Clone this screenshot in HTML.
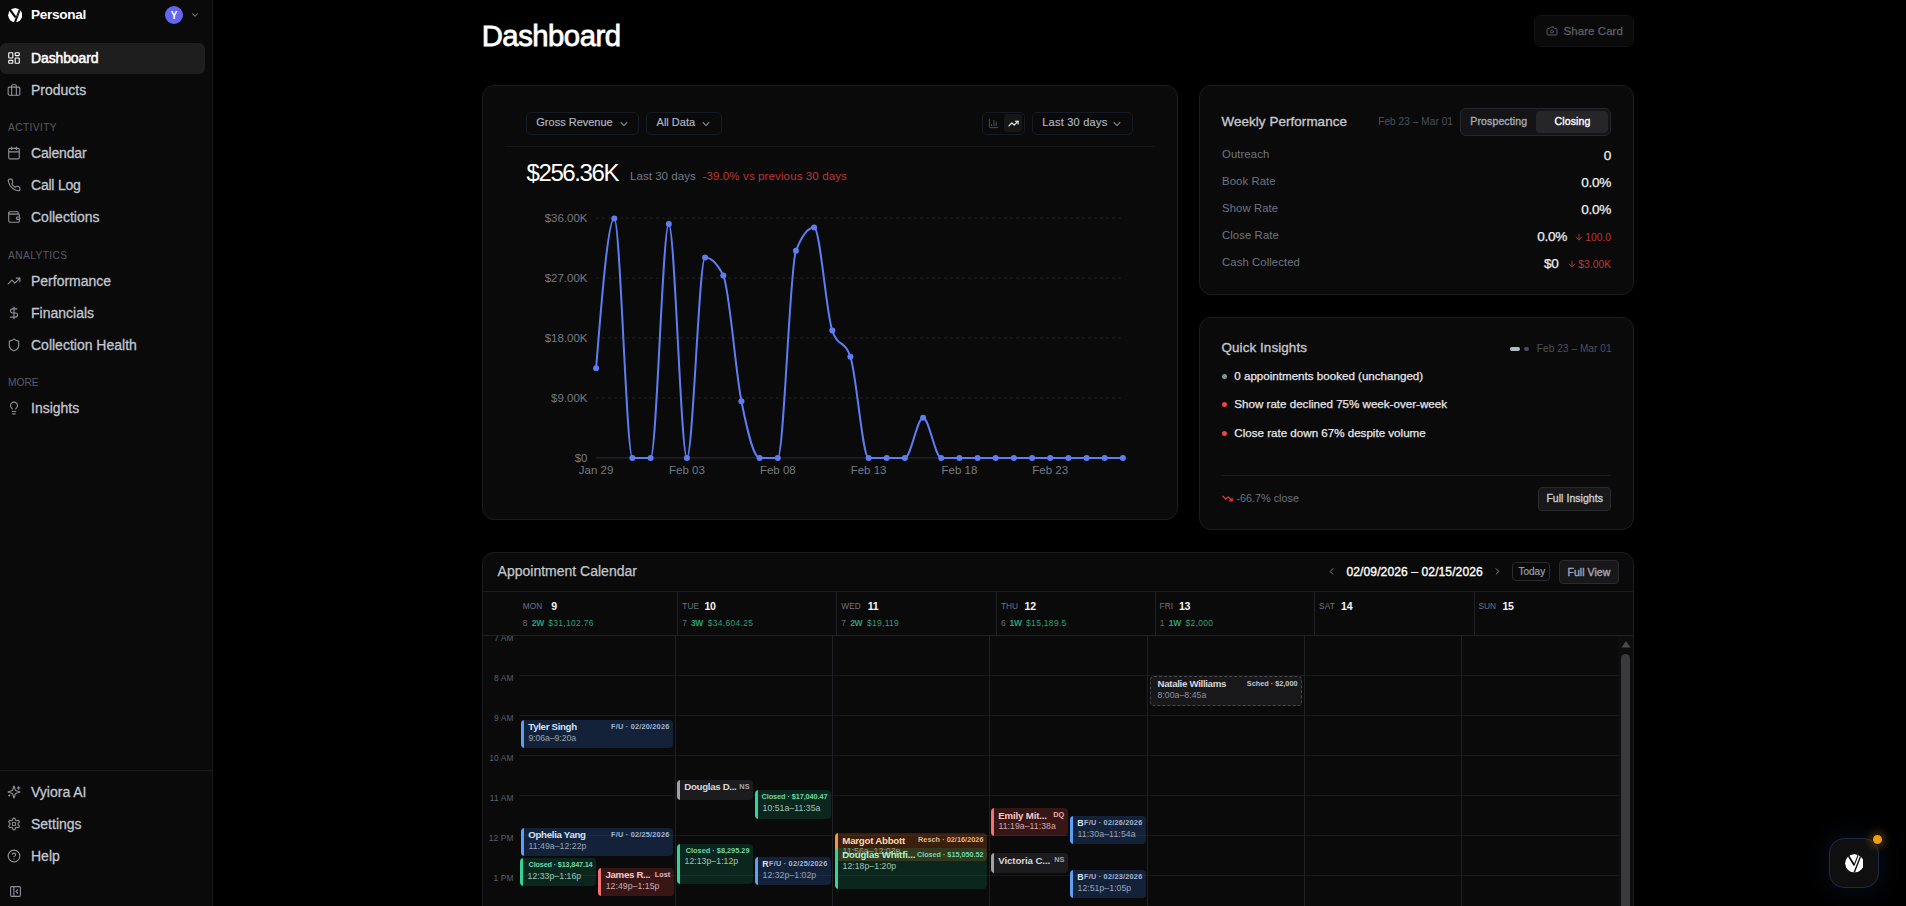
<!DOCTYPE html>
<html lang="en">
<head>
<meta charset="utf-8">
<title>Dashboard</title>
<style>
*{box-sizing:border-box;margin:0;padding:0}
html,body{width:1906px;height:906px;overflow:hidden;background:#000;}
body{font-family:"Liberation Sans",sans-serif;color:#fff;position:relative;-webkit-font-smoothing:antialiased}
.abs{position:absolute}
svg.ic{fill:none;stroke:currentColor;stroke-width:2;stroke-linecap:round;stroke-linejoin:round;display:block}
/* ---------- sidebar ---------- */
#sb{position:absolute;left:0;top:0;width:213px;height:906px;background:#0a0a0a;border-right:1px solid #181818}
.nav{position:absolute;left:0;width:205px;height:31px;border-radius:6px;color:#c3c8d3;font-size:14px;font-weight:400;letter-spacing:0;-webkit-text-stroke:.28px currentColor}
.nav.on{background:#1e1e1e;color:#fff;letter-spacing:-.12px;-webkit-text-stroke:.5px currentColor}
.nav svg{position:absolute;left:7.4px;top:8px;width:14px;height:14px;color:#8d929c;stroke-width:1.9}
.nav.on svg{color:#fff}
.nav span{position:absolute;left:31px;top:0;line-height:31px;white-space:nowrap}
.sec{position:absolute;left:8px;font-size:10.2px;letter-spacing:.4px;color:#555c6b;line-height:12px;white-space:nowrap}
/* ---------- cards ---------- */
.card{position:absolute;background:#0a0a0a;border:1px solid #1c1c1f;border-radius:12px}
.t{position:absolute;white-space:nowrap;line-height:1}
</style>
</head>
<body>

<!-- ================= SIDEBAR ================= -->
<div id="sb">
  <svg class="abs" style="left:7.8px;top:7.7px" width="14.4" height="14.4" viewBox="0 0 20 20">
    <defs><clipPath id="lc1"><circle cx="10" cy="10" r="10"/></clipPath></defs>
    <g clip-path="url(#lc1)"><circle cx="10" cy="10" r="10" fill="#fff"/>
    <path d="M1.2 0.4 L10.6 12.9" stroke="#0a0a0a" stroke-width="3" fill="none"/>
    <path d="M16.9 0.7 L9.3 21" stroke="#0a0a0a" stroke-width="2.9" fill="none"/>
    <path d="M16 3.1 L12.2 13.4" stroke="#fff" stroke-width=".55" stroke-opacity=".7" stroke-dasharray="1.4 .9" fill="none"/></g>
  </svg>
  <div class="t" style="left:31px;top:8px;font-size:13.6px;font-weight:700;letter-spacing:-.3px">Personal</div>
  <div class="abs" style="left:165px;top:6px;width:18px;height:18px;border-radius:50%;background:#6366f1"></div>
  <div class="t" style="left:165px;top:10.8px;width:18px;text-align:center;font-size:10px;font-weight:700">Y</div>
  <svg class="ic abs" style="left:189.5px;top:10px;color:#7b818d;stroke-width:2.5" width="10" height="10" viewBox="0 0 24 24"><path d="m6 9 6 6 6-6"/></svg>

  <div class="nav on" style="top:43px"><svg class="ic" viewBox="0 0 24 24"><rect width="7" height="9" x="3" y="3" rx="1"/><rect width="7" height="5" x="14" y="3" rx="1"/><rect width="7" height="9" x="14" y="12" rx="1"/><rect width="7" height="5" x="3" y="16" rx="1"/></svg><span>Dashboard</span></div>
  <div class="nav" style="top:75px"><svg class="ic" viewBox="0 0 24 24"><rect width="20" height="14" x="2" y="7" rx="2" ry="2"/><path d="M16 21V5a2 2 0 0 0-2-2h-4a2 2 0 0 0-2 2v16"/></svg><span>Products</span></div>

  <div class="sec" style="top:122px">ACTIVITY</div>
  <div class="nav" style="top:138px"><svg class="ic" viewBox="0 0 24 24"><path d="M8 2v4"/><path d="M16 2v4"/><rect width="18" height="18" x="3" y="4" rx="2"/><path d="M3 10h18"/></svg><span style="letter-spacing:-.17px">Calendar</span></div>
  <div class="nav" style="top:170px"><svg class="ic" viewBox="0 0 24 24"><path d="M22 16.920v3a2 2 0 0 1-2.180 2 19.790 19.790 0 0 1-8.630-3.070 19.500 19.500 0 0 1-6-6 19.790 19.790 0 0 1-3.070-8.670A2 2 0 0 1 4.110 2h3a2 2 0 0 1 2 1.720 12.840 12.840 0 0 0 .7 2.810 2 2 0 0 1-.45 2.110L8.090 9.910a16 16 0 0 0 6 6l1.270-1.270a2 2 0 0 1 2.110-.45 12.840 12.840 0 0 0 2.810.7A2 2 0 0 1 22 16.920z"/></svg><span style="letter-spacing:-.22px">Call Log</span></div>
  <div class="nav" style="top:202px"><svg class="ic" viewBox="0 0 24 24"><path d="M19 7V4a1 1 0 0 0-1-1H5a2 2 0 0 0 0 4h15a1 1 0 0 1 1 1v4h-3a2 2 0 0 0 0 4h3a1 1 0 0 0 1-1v-2a1 1 0 0 0-1-1"/><path d="M3 5v14a2 2 0 0 0 2 2h15a1 1 0 0 0 1-1v-4"/></svg><span>Collections</span></div>

  <div class="sec" style="top:250px">ANALYTICS</div>
  <div class="nav" style="top:266px"><svg class="ic" viewBox="0 0 24 24"><polyline points="22 7 13.5 15.5 8.5 10.5 2 17"/><polyline points="16 7 22 7 22 13"/></svg><span>Performance</span></div>
  <div class="nav" style="top:298px"><svg class="ic" viewBox="0 0 24 24"><line x1="12" x2="12" y1="2" y2="22"/><path d="M17 5H9.500a3.500 3.500 0 0 0 0 7h5a3.500 3.500 0 0 1 0 7H6"/></svg><span>Financials</span></div>
  <div class="nav" style="top:330px"><svg class="ic" viewBox="0 0 24 24"><path d="M20 13c0 5-3.500 7.500-7.660 8.950a1 1 0 0 1-.67-.01C7.500 20.500 4 18 4 13V6a1 1 0 0 1 1-1c2 0 4.500-1.200 6.240-2.720a1.170 1.170 0 0 1 1.520 0C14.510 3.810 17 5 19 5a1 1 0 0 1 1 1z"/></svg><span>Collection Health</span></div>

  <div class="sec" style="top:377px;letter-spacing:0">MORE</div>
  <div class="nav" style="top:393px"><svg class="ic" viewBox="0 0 24 24"><path d="M15 14c.2-1 .7-1.700 1.500-2.500 1-.9 1.500-2.200 1.500-3.500A6 6 0 0 0 6 8c0 1 .2 2.200 1.500 3.500.7.700 1.300 1.500 1.500 2.500"/><path d="M9 18h6"/><path d="M10 22h4"/></svg><span>Insights</span></div>

  <div class="abs" style="left:0;top:770px;width:212px;height:1px;background:#1b1b1d"></div>
  <div class="nav" style="top:777px"><svg class="ic" viewBox="0 0 24 24"><path d="M9.937 15.500A2 2 0 0 0 8.500 14.063l-6.135-1.582a.5.5 0 0 1 0-.962L8.500 9.936A2 2 0 0 0 9.937 8.500l1.582-6.135a.5.5 0 0 1 .963 0L14.063 8.500A2 2 0 0 0 15.500 9.937l6.135 1.581a.5.5 0 0 1 0 .964L15.500 14.063a2 2 0 0 0-1.437 1.437l-1.582 6.135a.5.5 0 0 1-.963 0z"/><path d="M20 3v4"/><path d="M22 5h-4"/><path d="M4 17v2"/><path d="M5 18H3"/></svg><span>Vyiora AI</span></div>
  <div class="nav" style="top:809px"><svg class="ic" viewBox="0 0 24 24"><path d="M12.220 2h-.44a2 2 0 0 0-2 2v.18a2 2 0 0 1-1 1.730l-.43.25a2 2 0 0 1-2 0l-.15-.08a2 2 0 0 0-2.730.73l-.22.38a2 2 0 0 0 .73 2.730l.15.1a2 2 0 0 1 1 1.720v.51a2 2 0 0 1-1 1.740l-.15.09a2 2 0 0 0-.73 2.730l.22.38a2 2 0 0 0 2.730.73l.15-.08a2 2 0 0 1 2 0l.43.25a2 2 0 0 1 1 1.730V20a2 2 0 0 0 2 2h.44a2 2 0 0 0 2-2v-.18a2 2 0 0 1 1-1.730l.43-.25a2 2 0 0 1 2 0l.15.08a2 2 0 0 0 2.730-.73l.22-.39a2 2 0 0 0-.73-2.730l-.15-.08a2 2 0 0 1-1-1.740v-.5a2 2 0 0 1 1-1.740l.15-.09a2 2 0 0 0 .73-2.730l-.22-.38a2 2 0 0 0-2.730-.73l-.15.08a2 2 0 0 1-2 0l-.43-.25a2 2 0 0 1-1-1.730V4a2 2 0 0 0-2-2z"/><circle cx="12" cy="12" r="3"/></svg><span>Settings</span></div>
  <div class="nav" style="top:841px"><svg class="ic" viewBox="0 0 24 24"><circle cx="12" cy="12" r="10"/><path d="M9.090 9a3 3 0 0 1 5.830 1c0 2-3 3-3 3"/><path d="M12 17h.01"/></svg><span>Help</span></div>
  <svg class="ic abs" style="left:8.9px;top:885.4px;color:#8d929c" width="13" height="13" viewBox="0 0 24 24"><rect width="18" height="18" x="3" y="3" rx="2"/><path d="M9 3v18"/><path d="m16 15-3-3 3-3"/></svg>
</div>

<!-- ================= HEADER ================= -->
<div class="t" id="title" style="left:481.7px;top:21.3px;font-size:29.3px;font-weight:400;letter-spacing:-.5px;-webkit-text-stroke:.8px #fff">Dashboard</div>
<div class="abs" id="share" style="left:1534px;top:15px;width:100px;height:32px;border-radius:7px;background:#0a0a0a;border:1px solid #131315"></div>
<svg class="ic abs" style="left:1546px;top:25px;color:#555a66" width="12" height="12" viewBox="0 0 24 24"><path d="M14.500 4h-5L7 7H4a2 2 0 0 0-2 2v9a2 2 0 0 0 2 2h16a2 2 0 0 0 2-2V9a2 2 0 0 0-2-2h-3l-2.500-3z"/><circle cx="12" cy="13" r="3"/></svg>
<div class="t" style="left:1563.6px;top:26px;font-size:11.5px;color:#5e6169;font-weight:400;letter-spacing:.05px;-webkit-text-stroke:.25px currentColor">Share Card</div>

<!-- ================= CARDS ================= -->
<div class="card" id="c1" style="left:482px;top:85px;width:696px;height:435px"></div>
<div class="card" id="c2" style="left:1199px;top:85px;width:435px;height:210px"></div>
<div class="card" id="c3" style="left:1199px;top:317px;width:435px;height:213px"></div>
<div class="card" id="c4" style="left:482px;top:552px;width:1152px;height:380px"></div>

<!-- ================= CHART CARD CONTENT ================= -->
<style>
.btn{position:absolute;border:1px solid #151b26;border-radius:5px;background:#0a0a0a;color:#b3b8c3;font-size:11px;white-space:nowrap;-webkit-text-stroke:.15px currentColor}
.btn span{position:absolute;top:-.6px;line-height:21px}
.btn svg{position:absolute;color:#a3a8b3;stroke-width:2.1}
</style>
<div class="btn" style="left:526px;top:112px;width:113px;height:23px"><span style="left:9.3px">Gross Revenue</span><svg class="ic" style="left:90.6px;top:5.1px" width="12" height="12" viewBox="0 0 24 24"><path d="m6 9 6 6 6-6"/></svg></div>
<div class="btn" style="left:646px;top:112px;width:76px;height:23px"><span style="left:9.6px">All Data</span><svg class="ic" style="left:52.6px;top:5.1px" width="12" height="12" viewBox="0 0 24 24"><path d="m6 9 6 6 6-6"/></svg></div>
<div class="btn" style="left:982px;top:112px;width:43px;height:23px"></div>
<svg class="ic abs" style="left:987.6px;top:117.6px;color:#4d5563" width="11" height="11" viewBox="0 0 24 24"><path d="M3 3v16a2 2 0 0 0 2 2h16"/><path d="M18 17V9"/><path d="M13 17V5"/><path d="M8 17v-3"/></svg>
<div class="abs" style="left:1004px;top:114px;width:18px;height:18px;border-radius:3px;background:#171717"></div>
<svg class="ic abs" style="left:1007.6px;top:117.6px;color:#f0f1f3;stroke-width:2.5" width="11" height="11" viewBox="0 0 24 24"><polyline points="22 7 13.5 15.5 8.5 10.5 2 17"/><polyline points="16 7 22 7 22 13"/></svg>
<div class="btn" style="left:1032px;top:112px;width:101px;height:23px"><span style="left:9.2px;letter-spacing:.24px">Last 30 days</span><svg class="ic" style="left:78.4px;top:5.1px" width="12" height="12" viewBox="0 0 24 24"><path d="m6 9 6 6 6-6"/></svg></div>
<div class="abs" style="left:505px;top:146px;width:650px;height:1px;background:#161618"></div>
<div class="t" id="big" style="left:526.5px;top:161px;font-size:24px;letter-spacing:-1.4px;color:#fff">$256.36K</div>
<div class="t" style="left:630px;top:170.3px;font-size:11.6px;color:#727987">Last 30 days</div>
<div class="t" style="left:702.5px;top:170.3px;font-size:11.6px;color:#b93838;letter-spacing:.08px">-39.0% vs previous 30 days</div>
<svg class="abs" style="left:0;top:0;pointer-events:none" width="1906" height="906" viewBox="0 0 1906 906">
<g font-family="Liberation Sans, sans-serif" font-size="11.5" fill="#737a87"><text x="587.5" y="462.0" text-anchor="end">$0</text><text x="587.5" y="402.1" text-anchor="end">$9.00K</text><text x="587.5" y="342.1" text-anchor="end">$18.00K</text><text x="587.5" y="282.1" text-anchor="end">$27.00K</text><text x="587.5" y="222.2" text-anchor="end">$36.00K</text><text x="596.1" y="473.8" text-anchor="middle">Jan 29</text><text x="686.9" y="473.8" text-anchor="middle">Feb 03</text><text x="777.8" y="473.8" text-anchor="middle">Feb 08</text><text x="868.6" y="473.8" text-anchor="middle">Feb 13</text><text x="959.4" y="473.8" text-anchor="middle">Feb 18</text><text x="1050.2" y="473.8" text-anchor="middle">Feb 23</text></g>
<line x1="596" x2="1123" y1="397.9" y2="397.9" stroke="#1f2329" stroke-width="1" stroke-dasharray="3 3"/><line x1="596" x2="1123" y1="338.0" y2="338.0" stroke="#1f2329" stroke-width="1" stroke-dasharray="3 3"/><line x1="596" x2="1123" y1="278.0" y2="278.0" stroke="#1f2329" stroke-width="1" stroke-dasharray="3 3"/><line x1="596" x2="1123" y1="218.1" y2="218.1" stroke="#1f2329" stroke-width="1" stroke-dasharray="3 3"/>
<line x1="596" x2="1123" y1="457.9" y2="457.9" stroke="#2a303b" stroke-width="1"/>
<path d="M596.10,368.24C602.16,293.37,608.21,218.50,614.27,218.50C620.32,218.50,626.38,457.90,632.43,457.90C638.49,457.90,644.54,457.90,650.60,457.90C656.65,457.90,662.71,224.09,668.76,224.09C674.82,224.09,680.87,457.90,686.93,457.90C692.98,457.90,699.04,257.53,705.09,257.53C711.15,257.53,717.20,263.48,723.26,275.39C729.31,287.29,735.37,370.86,741.42,401.28C747.48,431.70,753.53,457.90,759.59,457.90C765.64,457.90,771.70,457.90,777.76,457.90C783.81,457.90,789.87,266.27,795.92,250.72C801.98,235.17,808.03,227.40,814.09,227.40C820.14,227.40,826.20,313.10,832.25,330.55C838.31,348.00,844.36,339.27,850.42,356.72C856.47,374.17,862.53,457.90,868.58,457.90C874.64,457.90,880.69,457.90,886.75,457.90C892.80,457.90,898.86,457.90,904.91,457.90C910.97,457.90,917.02,417.73,923.08,417.73C929.13,417.73,935.19,457.90,941.24,457.90C947.30,457.90,953.36,457.90,959.41,457.90C965.47,457.90,971.52,457.90,977.58,457.90C983.63,457.90,989.69,457.90,995.74,457.90C1001.80,457.90,1007.85,457.90,1013.91,457.90C1019.96,457.90,1026.02,457.90,1032.07,457.90C1038.13,457.90,1044.18,457.90,1050.24,457.90C1056.29,457.90,1062.35,457.90,1068.40,457.90C1074.46,457.90,1080.51,457.90,1086.57,457.90C1092.62,457.90,1098.68,457.90,1104.73,457.90C1110.79,457.90,1116.84,457.90,1122.90,457.90" fill="none" stroke="#5f7df3" stroke-width="2" stroke-linejoin="round"/>
<g fill="#5f7df3"><circle cx="596.1" cy="368.2" r="3"/><circle cx="614.3" cy="218.5" r="3"/><circle cx="632.4" cy="457.9" r="3"/><circle cx="650.6" cy="457.9" r="3"/><circle cx="668.8" cy="224.1" r="3"/><circle cx="686.9" cy="457.9" r="3"/><circle cx="705.1" cy="257.5" r="3"/><circle cx="723.3" cy="275.4" r="3"/><circle cx="741.4" cy="401.3" r="3"/><circle cx="759.6" cy="457.9" r="3"/><circle cx="777.8" cy="457.9" r="3"/><circle cx="795.9" cy="250.7" r="3"/><circle cx="814.1" cy="227.4" r="3"/><circle cx="832.3" cy="330.5" r="3"/><circle cx="850.4" cy="356.7" r="3"/><circle cx="868.6" cy="457.9" r="3"/><circle cx="886.7" cy="457.9" r="3"/><circle cx="904.9" cy="457.9" r="3"/><circle cx="923.1" cy="417.7" r="3"/><circle cx="941.2" cy="457.9" r="3"/><circle cx="959.4" cy="457.9" r="3"/><circle cx="977.6" cy="457.9" r="3"/><circle cx="995.7" cy="457.9" r="3"/><circle cx="1013.9" cy="457.9" r="3"/><circle cx="1032.1" cy="457.9" r="3"/><circle cx="1050.2" cy="457.9" r="3"/><circle cx="1068.4" cy="457.9" r="3"/><circle cx="1086.6" cy="457.9" r="3"/><circle cx="1104.7" cy="457.9" r="3"/><circle cx="1122.9" cy="457.9" r="3"/></g>
</svg>

<!-- ================= WEEKLY PERFORMANCE ================= -->
<style>
.sb6{-webkit-text-stroke:.35px currentColor}
.lab{position:absolute;left:1222px;font-size:11.3px;color:#6f7583;white-space:nowrap;line-height:1;letter-spacing:.1px}
.val{position:absolute;right:295px;font-size:13.6px;color:#eceef2;white-space:nowrap;line-height:1;letter-spacing:-.3px;-webkit-text-stroke:.25px currentColor}
.dlt{position:absolute;right:295px;font-size:10.3px;color:#b93838;white-space:nowrap;line-height:1}
</style>
<div class="t sb6" style="left:1221.5px;top:115px;font-size:13.4px;color:#c4c7ce;letter-spacing:.08px">Weekly Performance</div>
<div class="t" style="left:1378.2px;top:116.9px;font-size:10.1px;color:#4a515e;letter-spacing:.05px">Feb 23 – Mar 01</div>
<div class="abs" style="left:1460px;top:108px;width:151px;height:28px;border-radius:6px;background:#141416;border:1px solid #27272b"></div>
<div class="abs" style="left:1536px;top:111px;width:72px;height:22px;border-radius:4px;background:#262629"></div>
<div class="t sb6" style="left:1470.3px;top:116.2px;font-size:10.5px;color:#a4a9b4;letter-spacing:.13px">Prospecting</div>
<div class="t sb6" style="left:1554.6px;top:116.2px;font-size:10.5px;color:#fff;letter-spacing:.13px">Closing</div>
<div class="lab" style="top:148.9px">Outreach</div><div class="val" style="top:149.2px">0</div><div class="lab" style="top:175.9px">Book Rate</div><div class="val" style="top:176.2px">0.0%</div><div class="lab" style="top:202.9px">Show Rate</div><div class="val" style="top:203.2px">0.0%</div><div class="lab" style="top:229.9px">Close Rate</div><div class="dlt" style="top:232.1px"><svg class="ic" style="display:inline-block;vertical-align:-1px;margin-right:1.5px;stroke-width:2.2" width="10" height="10" viewBox="0 0 24 24"><path d="M12 5v14"/><path d="m19 12-7 7-7-7"/></svg>100.0</div><div class="val" style="right:338.9px;top:230.2px">0.0%</div><div class="lab" style="top:256.9px">Cash Collected</div><div class="dlt" style="top:259.1px"><svg class="ic" style="display:inline-block;vertical-align:-1px;margin-right:1.5px;stroke-width:2.2" width="10" height="10" viewBox="0 0 24 24"><path d="M12 5v14"/><path d="m19 12-7 7-7-7"/></svg>$3.00K</div><div class="val" style="right:347.4px;top:257.2px">$0</div>
<!-- ================= QUICK INSIGHTS ================= -->
<style>
.bl{position:absolute;left:1234.3px;font-size:11.6px;color:#e6e8ec;white-space:nowrap;line-height:1;-webkit-text-stroke:.25px currentColor}
.dot{position:absolute;left:1222px;width:5px;height:5px;border-radius:50%}
</style>
<div class="t sb6" style="left:1221.5px;top:341.3px;font-size:13.4px;color:#c4c7ce;letter-spacing:.1px">Quick Insights</div>
<div class="abs" style="left:1510px;top:346.5px;width:10px;height:4.5px;border-radius:3px;background:#b6bac4"></div>
<div class="abs" style="left:1524.3px;top:346.5px;width:4.5px;height:4.5px;border-radius:50%;background:#474e5c"></div>
<div class="t" style="left:1536.8px;top:344.2px;font-size:10.1px;color:#4a515e;letter-spacing:.05px">Feb 23 – Mar 01</div>
<div class="dot" style="top:374px;background:#868d9b"></div><div class="bl" style="top:370.4px">0 appointments booked (unchanged)</div>
<div class="dot" style="top:401.9px;background:#ef4444"></div><div class="bl" style="top:397.6px">Show rate declined 75% week-over-week</div>
<div class="dot" style="top:430.6px;background:#ef4444"></div><div class="bl" style="top:426.6px">Close rate down 67% despite volume</div>
<div class="abs" style="left:1222px;top:475px;width:389px;height:1px;background:#1c1c1f"></div>
<svg class="ic abs" style="left:1222px;top:493px;color:#dc3c3c;stroke-width:2.8" width="11" height="11" viewBox="0 0 24 24"><polyline points="22 17 13.5 8.5 8.5 13.5 2 7"/><polyline points="16 17 22 17 22 11"/></svg>
<div class="t" style="left:1236.5px;top:492.9px;font-size:10.8px;color:#6b7280;letter-spacing:0">-66.7% close</div>
<div class="abs" style="left:1538px;top:487px;width:73px;height:24px;border-radius:4px;background:#18181b;border:1px solid #2a2a2e"></div>
<div class="t sb6" style="left:1546.4px;top:493.2px;font-size:10.5px;color:#c9ccd3;letter-spacing:.04px">Full Insights</div>

<!-- ================= FLOATING BUTTON ================= -->
<div class="abs" style="left:1829px;top:838px;width:50px;height:50px;border-radius:15px;background:#0f0f10;border:1px solid #1d2a47;box-shadow:0 0 22px 6px rgba(30,58,110,.18)"></div>
<svg class="abs" style="left:1844.6px;top:853.9px" width="18.8" height="18.8" viewBox="0 0 20 20">
  <defs><clipPath id="lc2"><circle cx="10" cy="10" r="10"/></clipPath></defs>
  <g clip-path="url(#lc2)"><circle cx="10" cy="10" r="10" fill="#fff"/>
  <path d="M3 0.8 L9.9 11.9" stroke="#0f0f10" stroke-width="1.9" fill="none"/>
  <path d="M14.2 0.5 L9.6 12.2" stroke="#0f0f10" stroke-width="1.1" fill="none"/>
  <path d="M17.2 0.7 L9.3 21" stroke="#0f0f10" stroke-width="1.5" fill="none"/></g>
</svg>
<div class="abs" style="left:1871.8px;top:833.6px;width:11.4px;height:11.4px;border-radius:50%;background:#f59e0b;border:1.8px solid #070707;box-shadow:0 0 8px 2px rgba(245,158,11,.32)"></div>

<!-- ================= APPOINTMENT CALENDAR ================= -->
<style>
#cal{position:absolute;left:483px;top:552px;width:1150px;height:354px;overflow:hidden;border-radius:11px 11px 0 0}
#cal .t{position:absolute}
.vl{position:absolute;width:1px;background:#202024}
.hl{position:absolute;height:1px;background:#17181b;left:36px;width:1099px}
.wd{position:absolute;top:49.6px;font-size:8.3px;color:#6b7280;letter-spacing:.08px;line-height:1;white-space:nowrap}
.dn{position:absolute;top:49px;font-size:10.6px;font-weight:700;color:#f3f4f6;line-height:1;white-space:nowrap;letter-spacing:-.35px}
.st{position:absolute;top:66.8px;font-size:8.5px;line-height:1;white-space:nowrap;color:#2f9f77;letter-spacing:.3px}
.st b{font-weight:700;letter-spacing:-.35px}
.st i{font-style:normal;color:#636a78}
.tm{position:absolute;left:0;width:30.7px;text-align:right;font-size:8.4px;color:#5a606d;line-height:1;white-space:nowrap;letter-spacing:.15px}
.ev{position:absolute;border-radius:4px;overflow:hidden;height:28px}
.ev::before{content:"";position:absolute;left:0;top:0;bottom:0;width:3px;background:var(--c)}
.nobar::before{display:none}
.ev .n{position:absolute;left:7.3px;top:2px;font-size:9.7px;font-weight:700;line-height:1;white-space:nowrap;letter-spacing:-.32px}
.ev .h{position:absolute;left:7.5px;top:13.8px;font-size:8.7px;line-height:1;white-space:nowrap;letter-spacing:.05px}
.ev .g{position:absolute;right:3.5px;top:3.1px;font-size:7.3px;font-weight:700;line-height:1;white-space:nowrap;letter-spacing:0}
.blue{background:rgba(59,130,246,.2);--c:#5b9ff8}.blue .n{color:#d3e2fb}.blue .h{color:#9aa3b5}.blue .g{color:#a3b5d4}
.green{background:rgba(16,185,129,.16);--c:#34d399}.green .n{color:#a7f3d0}.green .h{color:#9fc5b8}.green .g{color:#6fd6a8}
.red{background:rgba(239,68,68,.2);--c:#f87171}.red .n{color:#fbc8c8}.red .h{color:#d3a9a9}.red .g{color:#e9b0b0}
.gray{background:#1c1c1f;--c:#a1a1aa}.gray .n{color:#d8d8dc}.gray .h{color:#8f8f99}.gray .g{color:#a6a6af}
.orange{background:rgba(249,115,22,.2);--c:#fb923c}.orange .n{color:#fed7aa}.orange .h{color:#b89a80}.orange .g{color:#e2b48c}
</style>
<div id="cal">
<div class="t" style="left:14.6px;top:12.2px;font-size:14px;color:#c4c7ce;letter-spacing:0;-webkit-text-stroke:.25px currentColor">Appointment Calendar</div>
<svg class="ic abs" style="left:843px;top:14px;color:#8b909a" width="11" height="11" viewBox="0 0 24 24"><path d="m15 18-6-6 6-6"/></svg>
<div class="t sb6" style="left:863.5px;top:13.8px;font-size:12.1px;color:#fff;letter-spacing:.08px">02/09/2026 – 02/15/2026</div>
<svg class="ic abs" style="left:1008.5px;top:14px;color:#8b909a" width="11" height="11" viewBox="0 0 24 24"><path d="m9 18 6-6-6-6"/></svg>
<div class="abs" style="left:1029px;top:10px;width:38px;height:19px;border-radius:4px;border:1px solid #2a2a2e"></div>
<div class="t" style="left:1035.5px;top:15.2px;font-size:10px;color:#9ca3af;-webkit-text-stroke:.2px currentColor">Today</div>
<div class="abs" style="left:1076px;top:8px;width:60px;height:24px;border-radius:4px;border:1px solid #2a2a2e;background:#18181b"></div>
<div class="t sb6" style="left:1084.5px;top:14.6px;font-size:10.5px;color:#a4a9b4;letter-spacing:.05px">Full View</div>
<div class="abs" style="left:0;top:39px;width:1150px;height:1px;background:#1d1d20"></div>
<div class="abs" style="left:0;top:83px;width:1150px;height:1px;background:#222226"></div>

<div class="vl" style="left:194px;top:40px;height:43px"></div>
<div class="vl" style="left:353px;top:40px;height:43px"></div>
<div class="vl" style="left:513px;top:40px;height:43px"></div>
<div class="vl" style="left:672px;top:40px;height:43px"></div>
<div class="vl" style="left:831px;top:40px;height:43px"></div>
<div class="vl" style="left:991px;top:40px;height:43px"></div>
<div class="wd" style="left:39.8px">MON</div><div class="dn" style="left:68.2px">9</div>
<div class="st" style="left:39.8px"><i>8</i></div>
<div class="st" style="left:48.8px"><b>2W</b></div>
<div class="st" style="left:65.2px">$31,102.76</div>
<div class="wd" style="left:199.3px">TUE</div><div class="dn" style="left:221.5px">10</div>
<div class="st" style="left:199.3px"><i>7</i></div>
<div class="st" style="left:207.9px"><b>3W</b></div>
<div class="st" style="left:224.7px">$34,604.25</div>
<div class="wd" style="left:358.3px">WED</div><div class="dn" style="left:384.8px">11</div>
<div class="st" style="left:358.3px"><i>7</i></div>
<div class="st" style="left:367.2px"><b>2W</b></div>
<div class="st" style="left:383.9px">$19,119</div>
<div class="wd" style="left:517.9px">THU</div><div class="dn" style="left:541.6px">12</div>
<div class="st" style="left:517.9px"><i>6</i></div>
<div class="st" style="left:526.5px"><b>1W</b></div>
<div class="st" style="left:543.1px">$15,189.5</div>
<div class="wd" style="left:676.6px">FRI</div><div class="dn" style="left:695.9px">13</div>
<div class="st" style="left:676.8px"><i>1</i></div>
<div class="st" style="left:685.8px"><b>1W</b></div>
<div class="st" style="left:702.6px">$2,000</div>
<div class="wd" style="left:836.1px">SAT</div><div class="dn" style="left:858.1px">14</div>
<div class="wd" style="left:995.4px">SUN</div><div class="dn" style="left:1019.4px">15</div>
<div class="abs" id="calbody" style="left:0;top:84px;width:1150px;height:270px;overflow:hidden">
<div class="tm" style="top:-2.2px">7 AM</div>
<div class="hl" style="top:39px"></div>
<div class="tm" style="top:37.8px">8 AM</div>
<div class="hl" style="top:79px"></div>
<div class="tm" style="top:77.8px">9 AM</div>
<div class="hl" style="top:119px"></div>
<div class="tm" style="top:117.8px">10 AM</div>
<div class="hl" style="top:159px"></div>
<div class="tm" style="top:157.8px">11 AM</div>
<div class="hl" style="top:199px"></div>
<div class="tm" style="top:197.8px">12 PM</div>
<div class="hl" style="top:239px"></div>
<div class="tm" style="top:237.8px">1 PM</div>
<div class="vl" style="left:192px;top:0;height:270px"></div>
<div class="vl" style="left:349px;top:0;height:270px"></div>
<div class="vl" style="left:506px;top:0;height:270px"></div>
<div class="vl" style="left:664px;top:0;height:270px"></div>
<div class="vl" style="left:821px;top:0;height:270px"></div>
<div class="vl" style="left:978px;top:0;height:270px"></div>
<div class="abs" style="left:1135px;top:0;width:15px;height:270px;background:#0d0d0d"></div>
<svg class="abs" style="left:1137.5px;top:4px" width="10" height="8" viewBox="0 0 10 8"><path d="M0.5 7.5 L5 1 L9.500 7.500 Z" fill="#4a4a4e"/></svg>
<div class="abs" style="left:1138px;top:17.5px;width:9px;height:300px;border-radius:5px;background:#3a3a3d"></div>
<div class="ev blue" style="left:38.0px;top:84.0px;width:152.0px;height:28.0px;"><div class="n">Tyler Singh</div><div class="h" style="letter-spacing:-0.080px">9:06a–9:20a</div><div class="g" style="letter-spacing:0.230px">F/U · 02/20/2026</div></div>
<div class="ev blue" style="left:38.0px;top:192.0px;width:152.0px;height:28.0px;"><div class="n">Ophelia Yang</div><div class="h">11:49a–12:22p</div><div class="g" style="letter-spacing:0.230px">F/U · 02/25/2026</div></div>
<div class="ev green" style="left:37.0px;top:222.0px;width:76.0px;height:28.0px;"><div class="h">12:33p–1:16p</div><div class="g" style="letter-spacing:-0.180px">Closed · $13,847.14</div></div>
<div class="ev red" style="left:115.2px;top:232.3px;width:75.5px;height:27.5px;"><div class="n">James R...</div><div class="h">12:49p–1:15p</div><div class="g" style="letter-spacing:0.000px">Lost</div></div>
<div class="ev gray" style="left:194.0px;top:144.0px;width:76.0px;height:19.8px;"><div class="n">Douglas D...</div><div class="g" style="letter-spacing:0.000px">NS</div></div>
<div class="ev green" style="left:272.0px;top:154.3px;width:76.0px;height:28.5px;"><div class="h">10:51a–11:35a</div><div class="g" style="letter-spacing:-0.075px">Closed · $17,040.47</div></div>
<div class="ev green" style="left:194.0px;top:207.7px;width:76.0px;height:40.3px;"><div class="h">12:13p–1:12p</div><div class="g" style="letter-spacing:0.025px">Closed · $8,295.29</div></div>
<div class="ev blue" style="left:272.0px;top:221.0px;width:76.0px;height:28.0px;"><div class="n" style="font-size:8.9px;top:2.6px">R</div><div class="h">12:32p–1:02p</div><div class="g" style="right:auto;left:14px;letter-spacing:0.230px">F/U · 02/25/2026</div></div>
<div class="ev orange" style="left:352.0px;top:197.3px;width:152.0px;height:28.0px;"><div class="n" style="letter-spacing:-0.24px;top:2.9px;">Margot Abbott</div><div class="h">11:56a–12:03p</div><div class="g" style="letter-spacing:0.030px">Resch · 02/16/2026</div></div>
<div class="ev green" style="left:352.0px;top:212.0px;width:152.0px;height:40.8px;"><div class="n" style="letter-spacing:-0.17px;">Douglas Whitfi...</div><div class="h">12:18p–1:20p</div><div class="g" style="letter-spacing:-0.040px">Closed · $15,050.52</div></div>
<div class="ev red" style="left:508.0px;top:172.0px;width:76.8px;height:27.8px;"><div class="n" style="letter-spacing:-0.17px;top:2.9px;">Emily Mit...</div><div class="h">11:19a–11:38a</div><div class="g" style="letter-spacing:0.000px">DQ</div></div>
<div class="ev blue" style="left:587.0px;top:180.0px;width:76.0px;height:27.8px;"><div class="n" style="font-size:8.9px;top:2.6px">B</div><div class="h" style="letter-spacing:0.120px">11:30a–11:54a</div><div class="g" style="right:auto;left:14px;letter-spacing:0.230px">F/U · 02/26/2026</div></div>
<div class="ev gray" style="left:508.0px;top:217.0px;width:76.8px;height:20.0px;"><div class="n" style="letter-spacing:-0.10px;top:2.9px;">Victoria C...</div><div class="g" style="letter-spacing:0.000px">NS</div></div>
<div class="ev blue" style="left:587.0px;top:234.0px;width:76.0px;height:27.8px;"><div class="n" style="font-size:8.9px;top:2.6px">B</div><div class="h">12:51p–1:05p</div><div class="g" style="right:auto;left:14px;letter-spacing:0.230px">F/U · 02/23/2026</div></div>
<div class="ev gray nobar" style="left:667.0px;top:40.0px;width:152px;height:30px;border:1px dashed #46464c;background:#18181b"><div class="n" style="left:6.5px;top:2.4px">Natalie Williams</div><div class="h" style="left:6.5px;top:14px">8:00a–8:45a</div><div class="g" style="color:#c4c4cc">Sched · $2,000</div></div>
</div></div>
<!-- END CAL -->
</body>
</html>
